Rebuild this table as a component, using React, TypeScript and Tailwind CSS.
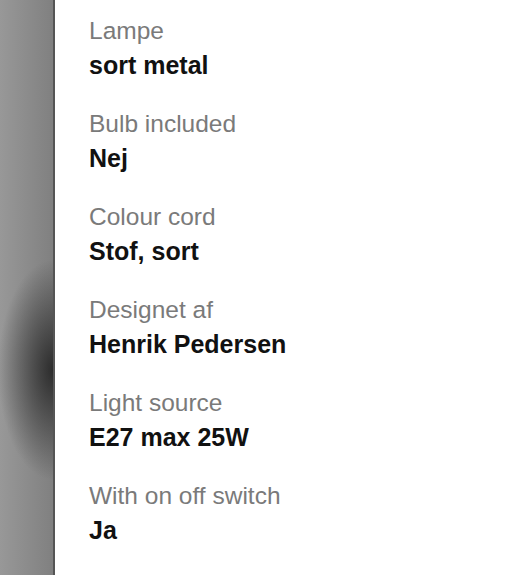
const specs = [
  { label: "Lampe", value: "sort metal" },
  { label: "Bulb included", value: "Nej" },
  { label: "Colour cord", value: "Stof, sort" },
  { label: "Designet af", value: "Henrik Pedersen" },
  { label: "Light source", value: "E27 max 25W" },
  { label: "With on off switch", value: "Ja" },
];

const App = () => {
  return (
    <div className="flex h-[575px] w-[508px] overflow-hidden bg-white font-['Helvetica_Neue','Liberation_Sans',Arial,sans-serif]">
      <div className="w-[55px] shrink-0 border-r-2 border-[#555] bg-[radial-gradient(ellipse_55px_110px_at_100%_370px,rgba(35,35,35,0.9),rgba(35,35,35,0)),linear-gradient(to_right,#989898,#808080)]" />
      <div className="flex flex-col gap-[25px] pl-[34px] pt-[14px]">
        {specs.map((item) => (
          <div key={item.label} className="flex flex-col">
            <p className="text-[24.5px] leading-[34px] font-light text-[#7a7a7a]">{item.label}</p>
            <p className="text-[25px] leading-[34px] font-bold text-[#111]">{item.value}</p>
          </div>
        ))}
      </div>
    </div>
  );
};

export default App;
